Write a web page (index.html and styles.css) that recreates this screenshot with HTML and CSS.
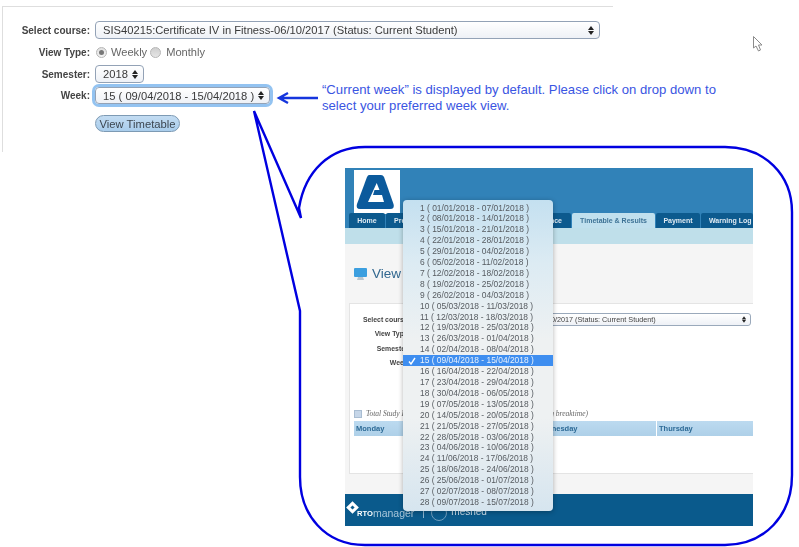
FILE: index.html
```html
<!DOCTYPE html>
<html lang="en">
<head>
<meta charset="utf-8">
<title>View Timetable</title>
<link rel="stylesheet" href="styles.css">
</head>
<body>
<main class="canvas">
  <section class="panel">
    <div class="row">
      <span class="label">Select course:</span>
      <div class="select select-course"><span>SIS40215:Certificate IV in Fitness-06/10/2017 (Status: Current Student)</span><i class="updown"></i></div>
    </div>
    <div class="row row-radio">
      <span class="label">View Type:</span>
      <span class="radio radio-on"></span><span class="radio-text">Weekly</span>
      <span class="radio radio-off"></span><span class="radio-text">Monthly</span>
    </div>
    <div class="row">
      <span class="label">Semester:</span>
      <div class="select select-sem"><span>2018</span><i class="updown"></i></div>
    </div>
    <div class="row row-week">
      <span class="label">Week:</span>
      <div class="select select-week"><span>15 ( 09/04/2018 - 15/04/2018 )</span><i class="updown"></i></div>
    </div>
    <div class="row row-btn">
      <span class="label"></span>
      <button class="btn" type="button">View Timetable</button>
    </div>
  </section>

  <p class="note">“Current week” is displayed by default. Please click on drop down to<br>select your preferred week view.</p>

  <svg class="overlay" viewBox="0 0 799 547" aria-hidden="true">
    <path class="callout" d="M254 111 L301 218 L299 208 C305 171 330 147 365 147 L725 147 C765 147 792 175 792 212 L792 475 C792 515 765 545 725 545 L365 545 C325 545 300 515 300 477 L300 311 Z"/>
    <path class="arrow" d="M318 98 H280 M288 93 L279 98 L288 103"/>
    <path class="cursor" d="M753.5 36.5 V48 L756 46 L758.5 51 L760.5 50 L758.5 45 H762 Z"/>
  </svg>

  <section class="shot">
    <header class="shot-head">
      <div class="logo">
        <svg viewBox="0 0 46 44" width="46" height="44" aria-hidden="true">
          <path class="logo-a" d="M15 5 H27 Q29 5 30 7 L39.5 34 Q41 39 36 39 H6 Q1.5 39 3 34 L13 7 Q14 5 15 5 Z"/>
          <path class="logo-c" d="M22.7 13 L25.5 20 H20.5 L19 25 H28 L30 32 H14 Z"/>
        </svg>
      </div>
      <nav class="tabs">
        <span class="tab t-home">Home</span>
        <span class="tab t-prof">Profile</span>
        <span class="tab t-enrol"></span>
        <span class="tab t-att">Attendance</span>
        <span class="tab t-time tab-on">Timetable &amp; Results</span>
        <span class="tab t-pay">Payment</span>
        <span class="tab t-warn">Warning Log</span>
      </nav>
    </header>
    <div class="strip"></div>
    <div class="body">
      <h2 class="view-title">
        <svg viewBox="0 0 13 12" width="13" height="12" aria-hidden="true">
          <rect class="mon-screen" x="0" y="0" width="13" height="9" rx="1"/>
          <path class="mon-base" d="M4 9 H9 L10 12 H3 Z"/>
        </svg>
        <span>View</span>
      </h2>
      <div class="card">
        <div class="mini-row mini-first">
          <span class="mini-label">Select course:</span>
          <div class="mini-select"><span>SIS40215:Certificate IV in Fitness-06/10/2017 (Status: Current Student)</span><i class="updown"></i></div>
        </div>
        <div class="mini-row"><span class="mini-label">View Type:</span></div>
        <div class="mini-row"><span class="mini-label">Semester:</span></div>
        <div class="mini-row"><span class="mini-label">Week:</span></div>
        <div class="study">
          <i class="study-icon"></i>
          <div class="study-text"><span>Total Study Hours</span><span>(excluding breaktime)</span></div>
        </div>
        <div class="thead">
          <span class="th th-mon">Monday</span>
          <span class="th th-tue"></span>
          <span class="th th-wed">Wednesday</span>
          <span class="th th-thu">Thursday</span>
        </div>
      </div>
    </div>
    <footer class="foot">
      <i class="diamond"></i>
      <span class="rto">RTO</span><span class="mgr">manager</span>
      <i class="bar"></i>
      <i class="seal"></i>
      <span class="meshed">meshed</span>
    </footer>
    <div class="menu">
      <div class="item">1 ( 01/01/2018 - 07/01/2018 )</div>
      <div class="item">2 ( 08/01/2018 - 14/01/2018 )</div>
      <div class="item">3 ( 15/01/2018 - 21/01/2018 )</div>
      <div class="item">4 ( 22/01/2018 - 28/01/2018 )</div>
      <div class="item">5 ( 29/01/2018 - 04/02/2018 )</div>
      <div class="item">6 ( 05/02/2018 - 11/02/2018 )</div>
      <div class="item">7 ( 12/02/2018 - 18/02/2018 )</div>
      <div class="item">8 ( 19/02/2018 - 25/02/2018 )</div>
      <div class="item">9 ( 26/02/2018 - 04/03/2018 )</div>
      <div class="item">10 ( 05/03/2018 - 11/03/2018 )</div>
      <div class="item">11 ( 12/03/2018 - 18/03/2018 )</div>
      <div class="item">12 ( 19/03/2018 - 25/03/2018 )</div>
      <div class="item">13 ( 26/03/2018 - 01/04/2018 )</div>
      <div class="item">14 ( 02/04/2018 - 08/04/2018 )</div>
      <div class="item item-on"><svg class="check" viewBox="0 0 8 8" width="8" height="8" aria-hidden="true"><path d="M1 4.5 L3 7 L7 1"/></svg>15 ( 09/04/2018 - 15/04/2018 )</div>
      <div class="item">16 ( 16/04/2018 - 22/04/2018 )</div>
      <div class="item">17 ( 23/04/2018 - 29/04/2018 )</div>
      <div class="item">18 ( 30/04/2018 - 06/05/2018 )</div>
      <div class="item">19 ( 07/05/2018 - 13/05/2018 )</div>
      <div class="item">20 ( 14/05/2018 - 20/05/2018 )</div>
      <div class="item">21 ( 21/05/2018 - 27/05/2018 )</div>
      <div class="item">22 ( 28/05/2018 - 03/06/2018 )</div>
      <div class="item">23 ( 04/06/2018 - 10/06/2018 )</div>
      <div class="item">24 ( 11/06/2018 - 17/06/2018 )</div>
      <div class="item">25 ( 18/06/2018 - 24/06/2018 )</div>
      <div class="item">26 ( 25/06/2018 - 01/07/2018 )</div>
      <div class="item">27 ( 02/07/2018 - 08/07/2018 )</div>
      <div class="item">28 ( 09/07/2018 - 15/07/2018 )</div>
    </div>
  </section>
</main>
</body>
</html>
```
FILE: styles.css
```css
* { box-sizing: border-box; }
html, body { margin: 0; padding: 0; background: #fff; }
body { font-family: "Liberation Sans", Arial, sans-serif; overflow: hidden; }

.canvas { position: relative; width: 799px; height: 547px; overflow: hidden; }

/* top form */
.panel {
  margin: 6px 0 0 2px;
  width: 611px;
  height: 146px;
  padding-top: 14px;
  border-top: 1px solid #dedede;
  border-left: 1px solid #dedede;
  display: flex;
  flex-direction: column;
  gap: 6px;
  filter: blur(0.35px);
}
.row { display: flex; align-items: center; }
.row-radio { height: 14px; }
.row-week { margin-top: -2px; }
.row-btn { margin-top: 5px; }
.label {
  width: 87px;
  margin-right: 5px;
  flex: none;
  text-align: right;
  font-size: 10px;
  font-weight: 700;
  color: #444;
}
.select {
  position: relative;
  display: flex;
  align-items: center;
  justify-content: space-between;
  height: 18px;
  padding: 0 5px 0 7px;
  font-size: 11.2px;
  color: #3a3a3a;
  background: linear-gradient(#fff, #eef1f6);
  border: 1.5px solid #93a2b6;
  border-radius: 4px;
}
.select-course { width: 505px; }
.select-sem { width: 49px; }
.select-week {
  width: 175px;
  height: 17px;
  box-shadow: 0 0 0 3px #93c3f1;
}
.updown {
  display: block;
  position: relative;
  width: 6px;
  height: 9px;
  flex: none;
}
.updown::before, .updown::after {
  content: "";
  position: absolute;
  left: 0;
  border-left: 3px solid transparent;
  border-right: 3px solid transparent;
}
.updown::before { top: 0; border-bottom: 4px solid #222; }
.updown::after { bottom: 0; border-top: 4px solid #222; }

.radio {
  width: 11px;
  height: 11px;
  margin-right: 4px;
  border-radius: 50%;
  border: 1px solid #b5b5b5;
  background: linear-gradient(#e0e0e0, #f4f4f4);
  flex: none;
  display: flex;
  align-items: center;
  justify-content: center;
}
.radio-on { margin-left: 1px; }
.radio-on::after {
  content: "";
  width: 5px;
  height: 5px;
  border-radius: 50%;
  background: #777;
}
.radio-off { margin-left: 1px; margin-right: 5px; background: linear-gradient(#cfcfcf, #e6e6e6); }
.radio-text { font-size: 11.1px; color: #666; margin-right: 2px; }

.btn {
  width: 85px;
  height: 17px;
  padding: 0;
  font: 11.25px "Liberation Sans", Arial, sans-serif;
  color: #3c4650;
  background: linear-gradient(#c3dcf2, #a9cdec);
  border: 1px solid #7d9ab4;
  border-radius: 9px;
}

/* annotation */
.note {
  position: absolute;
  left: 322px;
  top: 82px;
  margin: 0;
  font-size: 13.13px;
  line-height: 16px;
  color: #3a55e2;
  white-space: nowrap;
}
.overlay { position: absolute; left: 0; top: 0; width: 799px; height: 547px; pointer-events: none; }
.callout { fill: none; stroke: #0000e0; stroke-width: 2.4; stroke-linejoin: miter; }
.arrow { fill: none; stroke: #1535dd; stroke-width: 2.4; }
.cursor { fill: #fff; stroke: #8b8b8b; stroke-width: 1; }

/* embedded screenshot */
.shot {
  position: absolute;
  left: 345px;
  top: 168px;
  width: 408px;
  height: 358px;
  overflow: hidden;
  display: flex;
  flex-direction: column;
  background: #f5f5f5;
  filter: blur(0.4px);
}
.shot-head { background: #3182b8; height: 60px; padding-top: 2px; flex: none; }
.logo { width: 46px; height: 44px; margin-left: 9px; background: #fff; }
.logo-a { fill: #0b5a9c; }
.logo-c { fill: #fff; }
.tabs { display: flex; gap: 1px; margin: -1px 0 0 4px; height: 15px; }
.tab {
  display: flex;
  align-items: center;
  justify-content: center;
  background: #0c5a8e;
  color: #dfeaf2;
  font-size: 7px;
  font-weight: 700;
  white-space: nowrap;
  border-radius: 2px 2px 0 0;
}
.t-home { width: 36px; }
.t-prof { width: 60px; justify-content: flex-start; padding-left: 8px; }
.t-enrol { width: 60px; }
.t-att { width: 63px; justify-content: flex-end; padding-right: 9px; }
.t-time { width: 83px; }
.t-pay { width: 44px; }
.t-warn { width: 52px; justify-content: flex-start; padding-left: 8px; overflow: hidden; }
.tab-on { background: #c0e0ee; color: #3e7396; }
.strip { height: 16px; background: #bfdfea; flex: none; }
.body { height: 250px; flex: none; background: #f5f5f5; padding: 24px 0 0 4px; }
.view-title {
  margin: 0 0 0 5px;
  height: 35px;
  display: flex;
  align-items: flex-start;
  gap: 5px;
  font-size: 13.5px;
  font-weight: 400;
  line-height: 11px;
  color: #31678f;
  white-space: nowrap;
}
.mon-screen { fill: #3c9fdf; }
.mon-base { fill: #b9c6cf; }
.card {
  height: 171px;
  background: #fff;
  border: 1px solid #e4e4e4;
  border-right: 0;
}
.mini-row { display: flex; align-items: center; height: 14.5px; }
.mini-first { margin-top: 8px; }
.mini-label {
  width: 58px;
  margin-left: 2px;
  margin-right: 2px;
  flex: none;
  text-align: right;
  font-size: 6.9px;
  font-weight: 700;
  color: #444;
}
.mini-select {
  width: 339px;
  height: 13px;
  display: flex;
  align-items: center;
  justify-content: space-between;
  padding: 0 3px 0 13px;
  font-size: 7.25px;
  white-space: nowrap;
  color: #444;
  background: linear-gradient(#fff, #eef1f6);
  border: 1px solid #9aa9bb;
  border-radius: 3px;
}
.mini-select .updown { transform: scale(.7); }
.study {
  display: flex;
  align-items: center;
  gap: 4px;
  margin: 39px 0 3px 4px;
  height: 9px;
}
.study-icon {
  width: 8px;
  height: 8px;
  background: #c6d6e8;
  border: 1px solid #a9bdd2;
  flex: none;
}
.study-text {
  width: 222px;
  display: flex;
  justify-content: space-between;
  font: italic 7.5px "Liberation Serif", serif;
  color: #666;
  white-space: nowrap;
}
.thead { display: flex; gap: 1px; margin-left: 4px; height: 15px; }
.th {
  display: flex;
  align-items: center;
  padding-left: 2px;
  font-size: 7.5px;
  font-weight: 700;
  color: #2d6a96;
  background: linear-gradient(#bcdaf0, #aed0e8);
}
.th-mon { width: 90px; }
.th-tue { width: 88px; }
.th-wed { width: 122px; }
.th-thu { flex: 1; }
.foot {
  position: relative;
  flex: 1;
  display: flex;
  align-items: center;
  padding: 6px 0 0 12px;
  background: #0a5a8c;
  color: #fff;
}
.diamond {
  position: absolute;
  left: 3px;
  top: 9px;
  width: 9px;
  height: 9px;
  transform: rotate(45deg);
  border: 3px solid #fff;
}
.rto { font-size: 7.6px; font-weight: 700; }
.mgr { font-size: 10.5px; color: #a8c6da; font-weight: 400; }
.bar { width: 1px; height: 10px; background: #8db4cf; margin: 0 0 0 9px; }
.seal { width: 16px; height: 16px; border-radius: 50%; border: 1px solid #6f9dbd; margin-left: 7px; }
.meshed { font-size: 10px; margin: -3px 0 0 4px; color: #cfe0ec; }

/* open week menu */
.menu {
  position: absolute;
  left: 58px;
  top: 32px;
  width: 150px;
  height: 311px;
  padding-top: 2.5px;
  border-radius: 4px;
  background: linear-gradient(#c4e0f0 0%, #dcebf3 20%, #eef1f2 45%, #eef1f2 70%, #d6e5ef 100%);
  box-shadow: 0 1px 5px rgba(0, 0, 0, .3);
}
.item {
  position: relative;
  height: 10.92px;
  line-height: 10.92px;
  padding-left: 17px;
  font-size: 8.44px;
  color: #565b60;
  white-space: nowrap;
}
.item-on { background: #3e8ef0; color: #e8f1fc; }
.check { position: absolute; left: 5px; top: 1.5px; fill: none; stroke: #fff; stroke-width: 1.4; }
```
